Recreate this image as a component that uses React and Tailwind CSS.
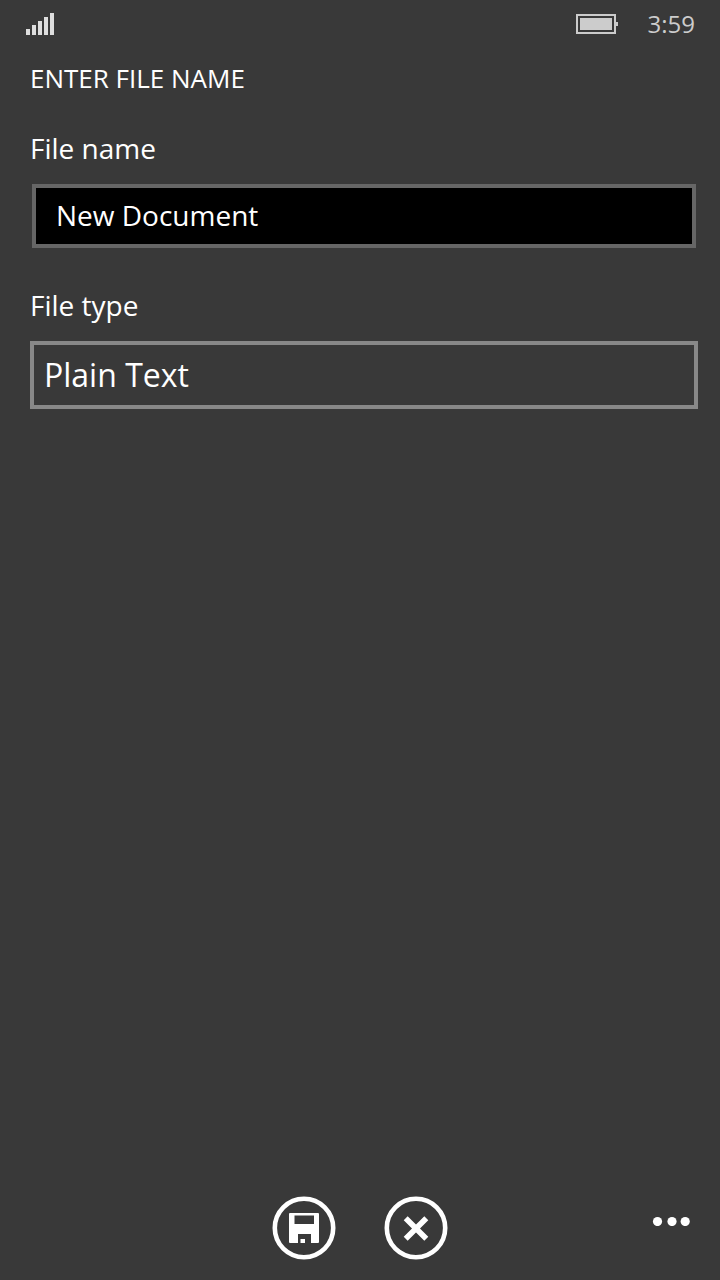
import { useState } from 'react';

function SignalIcon() {
  return (
    <svg width="28" height="22" viewBox="0 0 28 22" fill="#dedede" role="img" aria-label="Signal">
      <rect x="0" y="16" width="4" height="6" />
      <rect x="6" y="12" width="4" height="10" />
      <rect x="12" y="8" width="4" height="14" />
      <rect x="18" y="4" width="4" height="18" />
      <rect x="24" y="0" width="4" height="22" />
    </svg>
  );
}

function BatteryIcon() {
  return (
    <svg width="42" height="20" viewBox="0 0 42 20" fill="#cccccc" role="img" aria-label="Battery">
      <rect x="1" y="1" width="38" height="18" fill="none" stroke="#cccccc" strokeWidth="2" />
      <rect x="4" y="4" width="32" height="12" />
      <rect x="40" y="8" width="2" height="4" />
    </svg>
  );
}

function SaveIcon() {
  return (
    <svg width="64" height="64" viewBox="0 0 64 64" fill="none">
      <circle cx="32" cy="32" r="29.2" stroke="white" strokeWidth="4.6" />
      <path
        fill="white"
        fillRule="evenodd"
        d="M18 17h28a1 1 0 0 1 1 1v28a1 1 0 0 1-1 1h-7v-9H26v9h-8a1 1 0 0 1-1-1V18a1 1 0 0 1 1-1zM22.500 19.500v8.500h19.500v-8.500z"
      />
      <rect x="28.500" y="43" width="4.500" height="4" fill="white" />
    </svg>
  );
}

function CancelIcon() {
  return (
    <svg width="64" height="64" viewBox="0 0 64 64" fill="none" stroke="white">
      <circle cx="32" cy="32" r="29.2" strokeWidth="4.6" />
      <path d="M21.700 22.200l20.600 20.600M42.300 22.200l-20.600 20.600" strokeWidth="5.6" />
    </svg>
  );
}

export default function App() {
  const [fileName, setFileName] = useState('New Document');
  const [fileType, setFileType] = useState('Plain Text');

  return (
    <div className="flex min-h-screen flex-col bg-[#393939] font-['Open_Sans','Noto_Sans',sans-serif] text-white">
      {/* Status bar */}
      <header className="flex h-12 items-center justify-between pr-[25px] pl-[26px]">
        <SignalIcon />
        <div className="flex items-center gap-[30px] text-[#cccccc]">
          <BatteryIcon />
          <span className="text-[24px] leading-8">3:59</span>
        </div>
      </header>

      <main className="flex-1 pr-[22px] pl-[30px]">
        <h1 className="mt-3 text-[26px] leading-9">ENTER FILE NAME</h1>

        <form onSubmit={(e) => e.preventDefault()}>
          <label htmlFor="file-name" className="mt-8 block text-[28px] leading-10">
            File name
          </label>
          <div className="mt-4 px-0.5">
            <input
              id="file-name"
              type="text"
              value={fileName}
              onChange={(e) => setFileName(e.target.value)}
              className="block h-16 w-full rounded-none border-4 border-[#666666] bg-black px-5 pb-0.5 text-[28px] outline-none"
            />
          </div>

          <label htmlFor="file-type" className="mt-[37px] block text-[28px] leading-10">
            File type
          </label>
          <select
            id="file-type"
            value={fileType}
            onChange={(e) => setFileType(e.target.value)}
            className="mt-4 block h-[68px] w-full appearance-none rounded-none border-4 border-[#888888] bg-[#393939] px-2.5 text-[32px] outline-none"
          >
            <option>Plain Text</option>
            <option>Rich Text</option>
          </select>
        </form>
      </main>

      {/* App bar */}
      <footer className="grid grid-cols-[1fr_auto_1fr] items-start px-[30px] pb-5">
        <div className="col-start-2 flex gap-12">
          <button type="button" aria-label="Save">
            <SaveIcon />
          </button>
          <button type="button" aria-label="Cancel">
            <CancelIcon />
          </button>
        </div>
        <button type="button" aria-label="More" className="justify-self-end py-5">
          <svg width="38" height="10" viewBox="0 0 38 10" fill="white">
            <circle cx="5.500" cy="5.500" r="4.600" />
            <circle cx="20" cy="5.500" r="4.600" />
            <circle cx="33.200" cy="5.500" r="4.600" />
          </svg>
        </button>
      </footer>
    </div>
  );
}
